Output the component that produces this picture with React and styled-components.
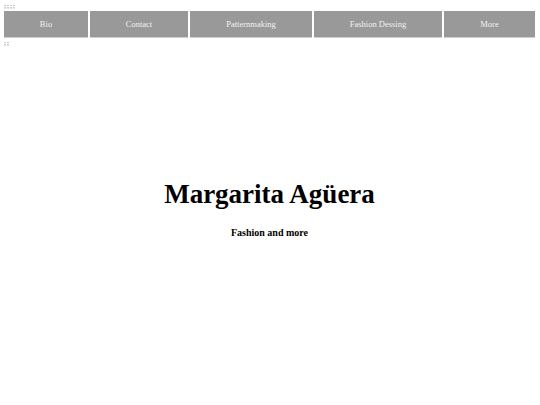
import React from "react";
import styled, { createGlobalStyle } from "styled-components";

const GlobalStyle = createGlobalStyle`
  html, body {
    margin: 0;
    padding: 0;
    background: #fff;
  }
  body {
    font-family: "Liberation Serif", "Times New Roman", serif;
    color: #000;
  }
`;

const Page = styled.div`
  padding: 2px 5px 0 4px;
`;

const Stray = styled.div`
  font-size: 7px;
  line-height: 8px;
  height: 8px;
  color: #444;
  letter-spacing: 1px;
`;

const Nav = styled.nav`
  display: flex;
  gap: 2px;
  margin: 1px 0 1px;
`;

const NavItem = styled.a`
  display: flex;
  align-items: center;
  justify-content: center;
  width: ${(p) => p.$w}px;
  flex: 0 0 auto;
  height: 26px;
  background: #999;
  border-bottom: 1px solid #cfcfcf;
  color: #f2f2f2;
  font-size: 8.5px;
  text-decoration: none;
`;

const Hero = styled.header`
  display: flex;
  flex-direction: column;
  align-items: center;
  padding-top: 132px;
`;

const Title = styled.h1`
  margin: 0;
  font-size: 27px;
  font-weight: 700;
  line-height: 31px;
`;

const Subtitle = styled.h2`
  margin: 17px 0 0;
  font-size: 10px;
  font-weight: 700;
  line-height: 12px;
`;

const links = [
  { label: "Bio", w: 84 },
  { label: "Contact", w: 98 },
  { label: "Patternmaking", w: 122 },
  { label: "Fashion Dessing", w: 128 },
  { label: "More", w: 91 },
];

export default function App() {
  return (
    <Page>
      <GlobalStyle />
      <Stray>;;;;</Stray>
      <Nav>
        {links.map((l) => (
          <NavItem key={l.label} href="#" $w={l.w}>
            {l.label}
          </NavItem>
        ))}
      </Nav>
      <Stray>;;</Stray>
      <Hero>
        <Title>Margarita Agüera</Title>
        <Subtitle>Fashion and more</Subtitle>
      </Hero>
    </Page>
  );
}
